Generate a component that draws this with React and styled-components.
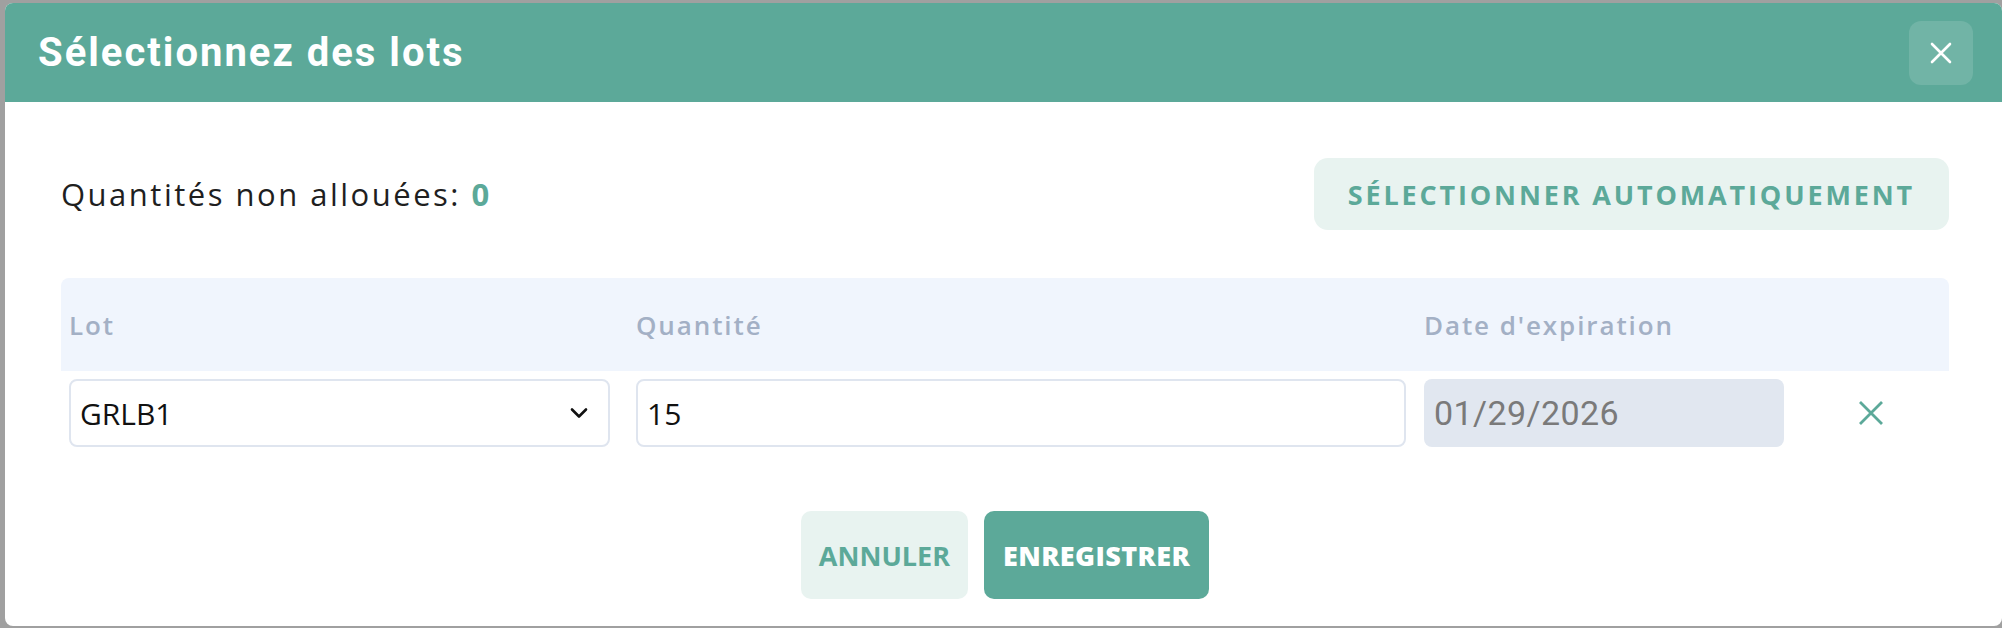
import styled, { createGlobalStyle } from "styled-components";

const GlobalStyle = createGlobalStyle`
  html, body {
    margin: 0;
    padding: 0;
    background: #a0a0a0;
    font-family: "Open Sans", "Liberation Sans", sans-serif;
  }
  * { box-sizing: border-box; }
`;

const TEAL = "#5ca999";

const Page = styled.div`
  width: 2002px;
  height: 628px;
  padding: 3px 0 0 5px;
  overflow: hidden;
`;

const Modal = styled.div`
  height: 623px;
  background: #ffffff;
  border-radius: 8px;
  overflow: hidden;
  display: flex;
  flex-direction: column;
`;

const Header = styled.div`
  height: 99px;
  flex: none;
  background: ${TEAL};
  display: flex;
  align-items: center;
  justify-content: space-between;
  padding: 0 29px 0 33px;
`;

const Title = styled.h2`
  margin: 0;
  color: #ffffff;
  font-family: "Roboto", "Liberation Sans", sans-serif;
  font-weight: 700;
  font-size: 40px;
  letter-spacing: 2px;
`;

const CloseButton = styled.button`
  width: 64px;
  height: 64px;
  border: 0;
  border-radius: 12px;
  background: rgba(255, 255, 255, 0.13);
  display: flex;
  align-items: center;
  justify-content: center;
  padding: 0;
`;

const Body = styled.div`
  padding: 56px 53px 0 56px;
`;

const TopRow = styled.div`
  display: flex;
  align-items: center;
  justify-content: space-between;
  height: 72px;
`;

const Remaining = styled.div`
  font-size: 31px;
  color: #1f1f1f;
  letter-spacing: 2.5px;
  b {
    color: ${TEAL};
    font-weight: 700;
  }
`;

const SoftButton = styled.button`
  height: ${(p) => p.$h || 72}px;
  padding: 0 ${(p) => p.$px || 34}px;
  border: 0;
  border-radius: ${(p) => p.$r || 14}px;
  background: ${(p) => (p.$solid ? TEAL : "#e8f3f0")};
  color: ${(p) => (p.$solid ? "#ffffff" : TEAL)};
  font-family: "Open Sans", "Liberation Sans", sans-serif;
  font-weight: ${(p) => (p.$solid ? 800 : 700)};
  font-size: ${(p) => p.$fs || 26}px;
  letter-spacing: ${(p) => p.$ls || 0}px;
  text-transform: uppercase;
`;

const Table = styled.div`
  margin-top: 48px;
`;

const Grid = styled.div`
  display: grid;
  grid-template-columns: 567px 788px 376px 1fr;
  align-items: center;
`;

const HeadRow = styled(Grid)`
  height: 93px;
  background: #f0f5fd;
  border-radius: 8px 8px 0 0;
`;

const HeadCell = styled.div`
  padding-left: 8px;
  color: #a3b0c5;
  font-weight: 600;
  font-size: 26px;
  letter-spacing: 1.9px;
`;

const BodyRow = styled(Grid)`
  padding-top: 8px;
`;

const Cell = styled.div`
  padding-left: 8px;
  display: flex;
  justify-content: ${(p) => (p.$center ? "center" : "flex-start")};
`;

const Field = styled.div`
  width: ${(p) => p.$w}px;
  height: 68px;
  border: ${(p) => (p.$disabled ? "0" : "2px solid #dfe5ef")};
  border-radius: 8px;
  background: ${(p) => (p.$disabled ? "#e1e7f0" : "#ffffff")};
  display: flex;
  align-items: center;
  justify-content: space-between;
  padding: 0 19px 0 ${(p) => (p.$disabled ? 10 : 9)}px;
  font-size: 30px;
  color: #111111;
`;

const DateText = styled.span`
  font-family: "Roboto", "Liberation Sans", sans-serif;
  font-size: 34px;
  letter-spacing: 0.4px;
  color: #7a7a7a;
`;

const RemoveButton = styled.button`
  border: 0;
  background: none;
  padding: 0;
  margin-left: -8px;
  display: flex;
`;

const Footer = styled.div`
  margin-top: 64px;
  display: flex;
  justify-content: center;
  gap: 16px;
`;

export default function App() {
  return (
    <>
      <GlobalStyle />
      <Page>
        <Modal>
          <Header>
            <Title>Sélectionnez des lots</Title>
            <CloseButton aria-label="Fermer">
              <svg width="22" height="22" viewBox="0 0 22 22">
                <path d="M2 2 L20 20 M20 2 L2 20" stroke="#ffffff" strokeWidth="2.6" strokeLinecap="round" />
              </svg>
            </CloseButton>
          </Header>
          <Body>
            <TopRow>
              <Remaining>
                Quantités non allouées: <b>0</b>
              </Remaining>
              <SoftButton $fs={27} $ls={2.85} $px={34}>Sélectionner automatiquement</SoftButton>
            </TopRow>
            <Table>
              <HeadRow>
                <HeadCell>Lot</HeadCell>
                <HeadCell>Quantité</HeadCell>
                <HeadCell>Date d'expiration</HeadCell>
                <HeadCell />
              </HeadRow>
              <BodyRow>
                <Cell>
                  <Field $w={541}>
                    <span>GRLB1</span>
                    <svg width="20" height="12" viewBox="0 0 20 12">
                      <path d="M3 2.5 L10 9.5 L17 2.5" fill="none" stroke="#111" strokeWidth="2.6" strokeLinecap="round" strokeLinejoin="round" />
                    </svg>
                  </Field>
                </Cell>
                <Cell>
                  <Field $w={770}>
                    <span>15</span>
                  </Field>
                </Cell>
                <Cell>
                  <Field $w={360} $disabled>
                    <DateText>01/29/2026</DateText>
                  </Field>
                </Cell>
                <Cell $center>
                  <RemoveButton aria-label="Supprimer">
                    <svg width="26" height="26" viewBox="0 0 26 26">
                      <path d="M2 2 L24 24 M24 2 L2 24" stroke={TEAL} strokeWidth="2.8" />
                    </svg>
                  </RemoveButton>
                </Cell>
              </BodyRow>
            </Table>
            <Footer>
              <SoftButton $h={88} $px={18} $r={10} $fs={27}>Annuler</SoftButton>
              <SoftButton $h={88} $px={19} $r={10} $fs={27} $ls={0.4} $solid>Enregistrer</SoftButton>
            </Footer>
          </Body>
        </Modal>
      </Page>
    </>
  );
}
